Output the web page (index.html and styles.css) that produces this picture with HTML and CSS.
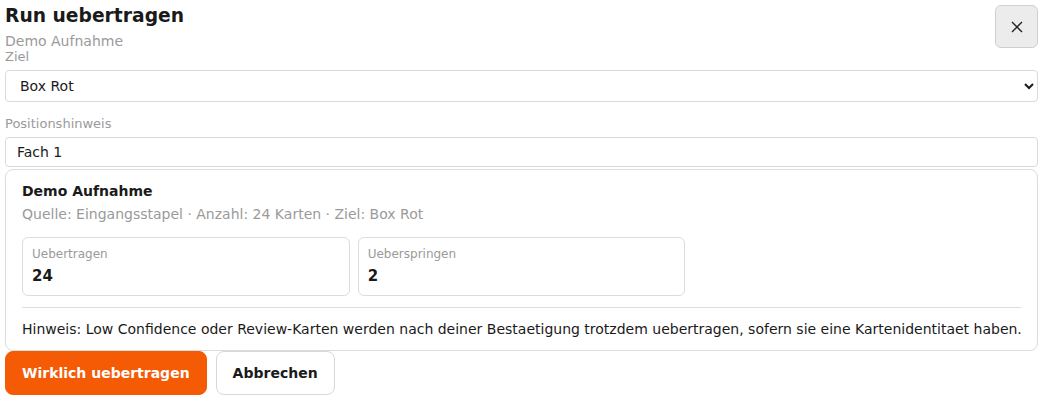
FILE: index.html
```html
<!DOCTYPE html>
<html lang="de">
<head>
<meta charset="utf-8">
<title>Run uebertragen</title>
<link rel="stylesheet" href="styles.css">
</head>
<body>
<div class="dialog">
  <div class="header">
    <div class="heading">
      <h1 class="title">Run uebertragen</h1>
      <div class="subtitle">Demo Aufnahme</div>
    </div>
    <button class="close" type="button" aria-label="Schliessen">
      <svg width="12" height="12" viewBox="0 0 12 12"><path d="M1 1L11 11M11 1L1 11" stroke="#222" stroke-width="1.4" fill="none"/></svg>
    </button>
  </div>
  <label class="label label-ziel" for="ziel">Ziel</label>
  <select class="select" id="ziel">
    <option>Box Rot</option>
  </select>
  <label class="label label-pos" for="pos">Positionshinweis</label>
  <input class="input" id="pos" type="text" value="Fach 1">
  <div class="card">
    <div class="card-title">Demo Aufnahme</div>
    <div class="card-meta">Quelle: Eingangsstapel · Anzahl: 24 Karten · Ziel: Box Rot</div>
    <div class="stats">
      <div class="stat">
        <div class="stat-label">Uebertragen</div>
        <div class="stat-value">24</div>
      </div>
      <div class="stat">
        <div class="stat-label">Ueberspringen</div>
        <div class="stat-value">2</div>
      </div>
    </div>
    <div class="divider"></div>
    <div class="hint">Hinweis: Low Confidence oder Review-Karten werden nach deiner Bestaetigung trotzdem uebertragen, sofern sie eine Kartenidentitaet haben.</div>
  </div>
  <div class="actions">
    <button class="btn btn-primary" type="button">Wirklich uebertragen</button>
    <button class="btn btn-secondary" type="button">Abbrechen</button>
  </div>
</div>
</body>
</html>
```
FILE: styles.css
```css
* { box-sizing: border-box; }
html, body { margin: 0; padding: 0; background: #fff; }
body {
  font-family: "DejaVu Sans", sans-serif;
  color: #1a1a1a;
}
.dialog {
  padding: 5px 5px 0 5px;
  display: flex;
  flex-direction: column;
}
.header {
  display: flex;
  justify-content: space-between;
  align-items: flex-start;
}
.title {
  margin: 0;
  font-size: 18.72px;
  line-height: 22px;
  font-weight: bold;
  color: #1a1a1a;
}
.subtitle {
  margin-top: 6px;
  font-size: 14px;
  line-height: 16px;
  color: #9a9a9a;
}
.close {
  width: 43px;
  height: 43px;
  padding: 0;
  border: 1px solid #cfcfcf;
  border-radius: 6px;
  background: #ececec;
  display: flex;
  align-items: center;
  justify-content: center;
  cursor: pointer;
}
.label {
  display: block;
  color: #9a9a9a;
  font-size: 13px;
  line-height: 15px;
}
.label-ziel {
  margin-top: 0;
  margin-bottom: 6px;
}
.label-pos {
  margin-top: 14px;
  margin-bottom: 6px;
}
.select {
  width: 100%;
  height: 32px;
  border: 1px solid #dadada;
  border-radius: 4px;
  background: #fff;
  font-family: "DejaVu Sans", sans-serif;
  font-size: 14px;
  color: #1a1a1a;
  padding: 0 10px;
}
.input {
  width: 100%;
  height: 30px;
  border: 1px solid #dadada;
  border-radius: 4px;
  background: #fff;
  font-family: "DejaVu Sans", sans-serif;
  font-size: 14px;
  color: #1a1a1a;
  padding: 0 11px;
}
.card {
  margin-top: 2px;
  border: 1px solid #dcdcdc;
  border-radius: 8px;
  padding: 13px 16px;
}
.card-title {
  font-size: 14px;
  line-height: 16px;
  font-weight: bold;
}
.card-meta {
  margin-top: 7px;
  font-size: 14px;
  line-height: 16px;
  color: #9a9a9a;
}
.stats {
  margin-top: 15px;
  display: grid;
  grid-template-columns: repeat(3, 1fr);
  gap: 8px;
}
.stat {
  border: 1px solid #dcdcdc;
  border-radius: 6px;
  padding: 9px 9px 10px;
}
.stat-label {
  font-size: 12px;
  line-height: 14px;
  color: #9a9a9a;
}
.stat-value {
  margin-top: 6px;
  font-size: 15px;
  line-height: 18px;
  font-weight: bold;
}
.divider {
  margin-top: 11px;
  border-top: 1px solid #dedede;
}
.hint {
  margin-top: 13px;
  margin-right: -6px;
  font-size: 14px;
  line-height: 16px;
  color: #1a1a1a;
}
.actions {
  margin-top: 0;
  display: flex;
  gap: 9px;
}
.btn {
  height: 44px;
  border-radius: 8px;
  font-family: "DejaVu Sans", sans-serif;
  font-size: 14px;
  font-weight: bold;
  padding: 0 16px;
  cursor: pointer;
}
.btn-primary {
  background: #f55a05;
  border: 1px solid #f55a05;
  color: #fff;
}
.btn-secondary {
  background: #fff;
  border: 1px solid #d8d8d8;
  color: #1a1a1a;
}
```
